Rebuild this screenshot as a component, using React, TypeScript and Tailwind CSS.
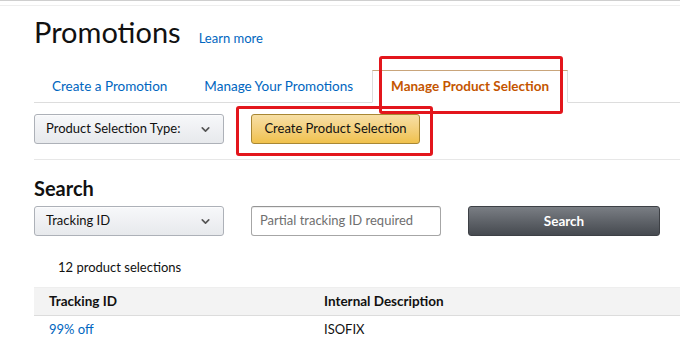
import React from "react";
import { ChevronDown } from "lucide-react";

const font = { fontFamily: "Lato, 'Open Sans', sans-serif" };

function Select({ label }: { label: string }) {
  return (
    <div className="flex items-center justify-between w-[190px] h-[30px] px-[11px] rounded-[3px] border border-[#adb1b8] bg-gradient-to-b from-[#f7f8fa] to-[#e7e9ec] text-[13px] text-[#111] shadow-[0_1px_0_rgba(255,255,255,0.6)_inset]">
      <span>{label}</span>
      <ChevronDown size={13} strokeWidth={3} className="text-[#555]" />
    </div>
  );
}

export default function App() {
  return (
    <div className="w-[680px] h-[344px] overflow-hidden bg-white relative" style={font}>
      <div className="h-[2px] border-t border-[#cfcfcf]" />
      <div className="h-[4px] border-b border-[#eeeeee]" />

      <div className="pl-[34px]">
        <div className="flex items-end h-[44px]">
          <h1 className="text-[29px] leading-[36px] text-[#111] font-normal">Promotions</h1>
          <a className="ml-[18px] mb-[2px] text-[13px] text-[#0066c0]">Learn more</a>
        </div>

        <div className="flex items-end h-[53px] border-b border-[#dddddd] text-[13.5px]">
          <div className="px-[18px] h-[32px] flex items-center text-[#0066c0]">Create a Promotion</div>
          <div className="px-[19px] h-[32px] flex items-center text-[#0066c0]">Manage Your Promotions</div>
          <div className="w-[196px] h-[33px] -mb-px flex items-center justify-center border border-[#dddddd] border-t-[#c9a57b] border-b-white bg-white font-bold text-[#c45500]">
            Manage Product Selection
          </div>
        </div>

        <div className="flex items-start pt-[11px] h-[57px] gap-[27px] border-b border-[#e7e7e7]">
          <Select label="Product Selection Type:" />
          <button className="w-[169px] h-[30px] rounded-[3px] border border-[#a88734] bg-gradient-to-b from-[#f7dfa5] to-[#f0c14b] text-[13px] text-[#111]">
            Create Product Selection
          </button>
        </div>

        <h2 className="mt-[16px] text-[20px] leading-[24px] font-bold text-[#111]">Search</h2>

        <div className="flex items-center mt-[6px] gap-[27px]">
          <Select label="Tracking ID" />
          <div className="w-[190px] h-[30px] px-[8px] flex items-center rounded-[3px] border border-[#a6a6a6] border-t-[#949494] text-[13px] text-[#6f6f6f] shadow-[0_1px_0_rgba(0,0,0,0.07)_inset]">
            Partial tracking ID required
          </div>
          <button className="w-[192px] h-[30px] rounded-[3px] border border-[#3d4045] bg-gradient-to-b from-[#7a7e84] to-[#464a50] text-[13.5px] font-bold text-white">
            Search
          </button>
        </div>

        <div className="mt-[20px] pl-[24px] text-[13px] text-[#111] leading-[22px]">12 product selections</div>

        <div className="mt-[9px] border-t border-[#eeeeee]">
          <div className="flex h-[28px] items-center bg-[#f3f3f3] border-b border-[#dcdcdc] text-[13.5px] font-bold text-[#111]">
            <div className="w-[290px] pl-[15px]">Tracking ID</div>
            <div>Internal Description</div>
          </div>
          <div className="flex h-[28px] items-center text-[13px]">
            <div className="w-[290px] pl-[15px] text-[#0066c0]">99% off</div>
            <div className="text-[#111]">ISOFIX</div>
          </div>
        </div>
      </div>

      <div className="absolute left-[379px] top-[56px] w-[184px] h-[58px] border-[3px] border-[#e3161c] rounded-[3px]" />
      <div className="absolute left-[236px] top-[106px] w-[197px] h-[50px] border-[3px] border-[#e3161c] rounded-[3px]" />
    </div>
  );
}
